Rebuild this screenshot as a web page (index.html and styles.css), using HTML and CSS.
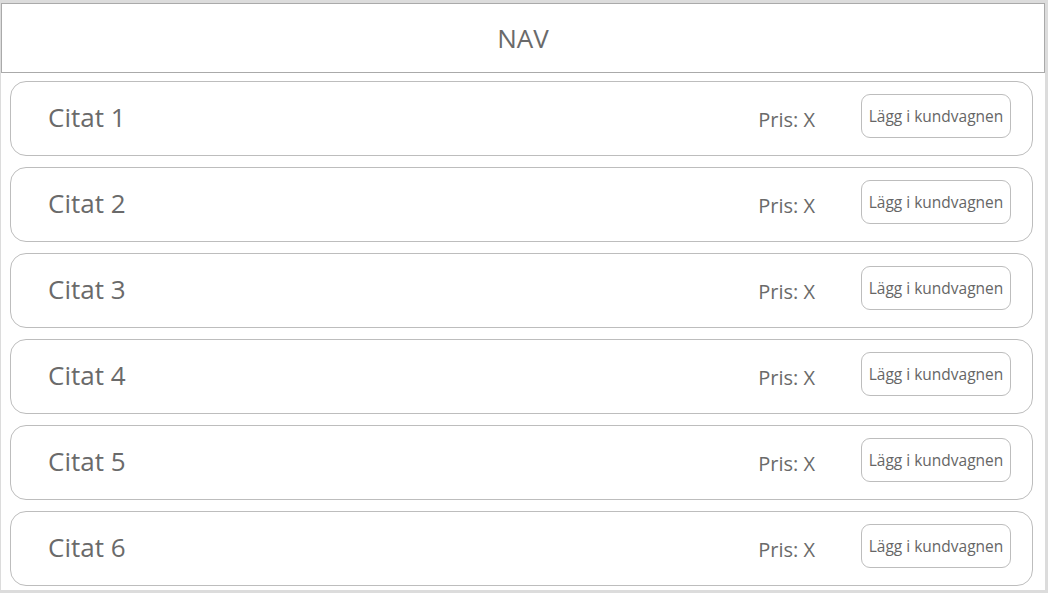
FILE: index.html
```html
<!DOCTYPE html>
<html lang="sv">
<head>
<meta charset="utf-8">
<title>Citat</title>
<link rel="stylesheet" href="styles.css">
</head>
<body>
<div class="frame">
  <header class="nav">NAV</header>
  <main class="list">
    <div class="card"><span class="title">Citat 1</span><span class="price">Pris: X</span><button class="buy">Lägg i kundvagnen</button></div>
    <div class="card"><span class="title">Citat 2</span><span class="price">Pris: X</span><button class="buy">Lägg i kundvagnen</button></div>
    <div class="card"><span class="title">Citat 3</span><span class="price">Pris: X</span><button class="buy">Lägg i kundvagnen</button></div>
    <div class="card"><span class="title">Citat 4</span><span class="price">Pris: X</span><button class="buy">Lägg i kundvagnen</button></div>
    <div class="card"><span class="title">Citat 5</span><span class="price">Pris: X</span><button class="buy">Lägg i kundvagnen</button></div>
    <div class="card"><span class="title">Citat 6</span><span class="price">Pris: X</span><button class="buy">Lägg i kundvagnen</button></div>
  </main>
</div>
</body>
</html>
```
FILE: styles.css
```css
html, body {
  margin: 0;
  padding: 0;
  background: #ffffff;
}
body {
  font-family: "Open Sans", "Noto Sans", sans-serif;
  color: #666666;
}
.frame {
  box-sizing: border-box;
  width: 1048px;
  height: 593px;
  border-style: solid;
  border-color: #dcdcdc;
  border-width: 3px 3px 3px 1px;
  display: flex;
  flex-direction: column;
}
.nav {
  box-sizing: border-box;
  height: 70px;
  border: 1px solid #aaaaaa;
  display: flex;
  align-items: center;
  justify-content: center;
  font-size: 26px;
  color: #6a6a6a;
}
.list {
  display: flex;
  flex-direction: column;
  gap: 11px;
  padding: 8px 12px 0 9px;
}
.card {
  box-sizing: border-box;
  height: 75px;
  border: 1px solid #bdbdbd;
  border-radius: 16px;
  display: flex;
  align-items: center;
  padding: 0 21px 0 37px;
}
.title {
  font-size: 26px;
  color: #6a6a6a;
  flex: 1;
  margin-top: -4px;
}
.price {
  font-size: 20px;
  color: #6a6a6a;
  margin-right: 46px;
  margin-top: 1px;
}
.buy {
  box-sizing: border-box;
  width: 150px;
  height: 44px;
  border: 1px solid #bdbdbd;
  border-radius: 9px;
  background: #ffffff;
  font-family: "Open Sans", "Noto Sans", sans-serif;
  font-size: 15.5px;
  color: #666666;
  padding: 0;
  margin-top: -6px;
}
```
